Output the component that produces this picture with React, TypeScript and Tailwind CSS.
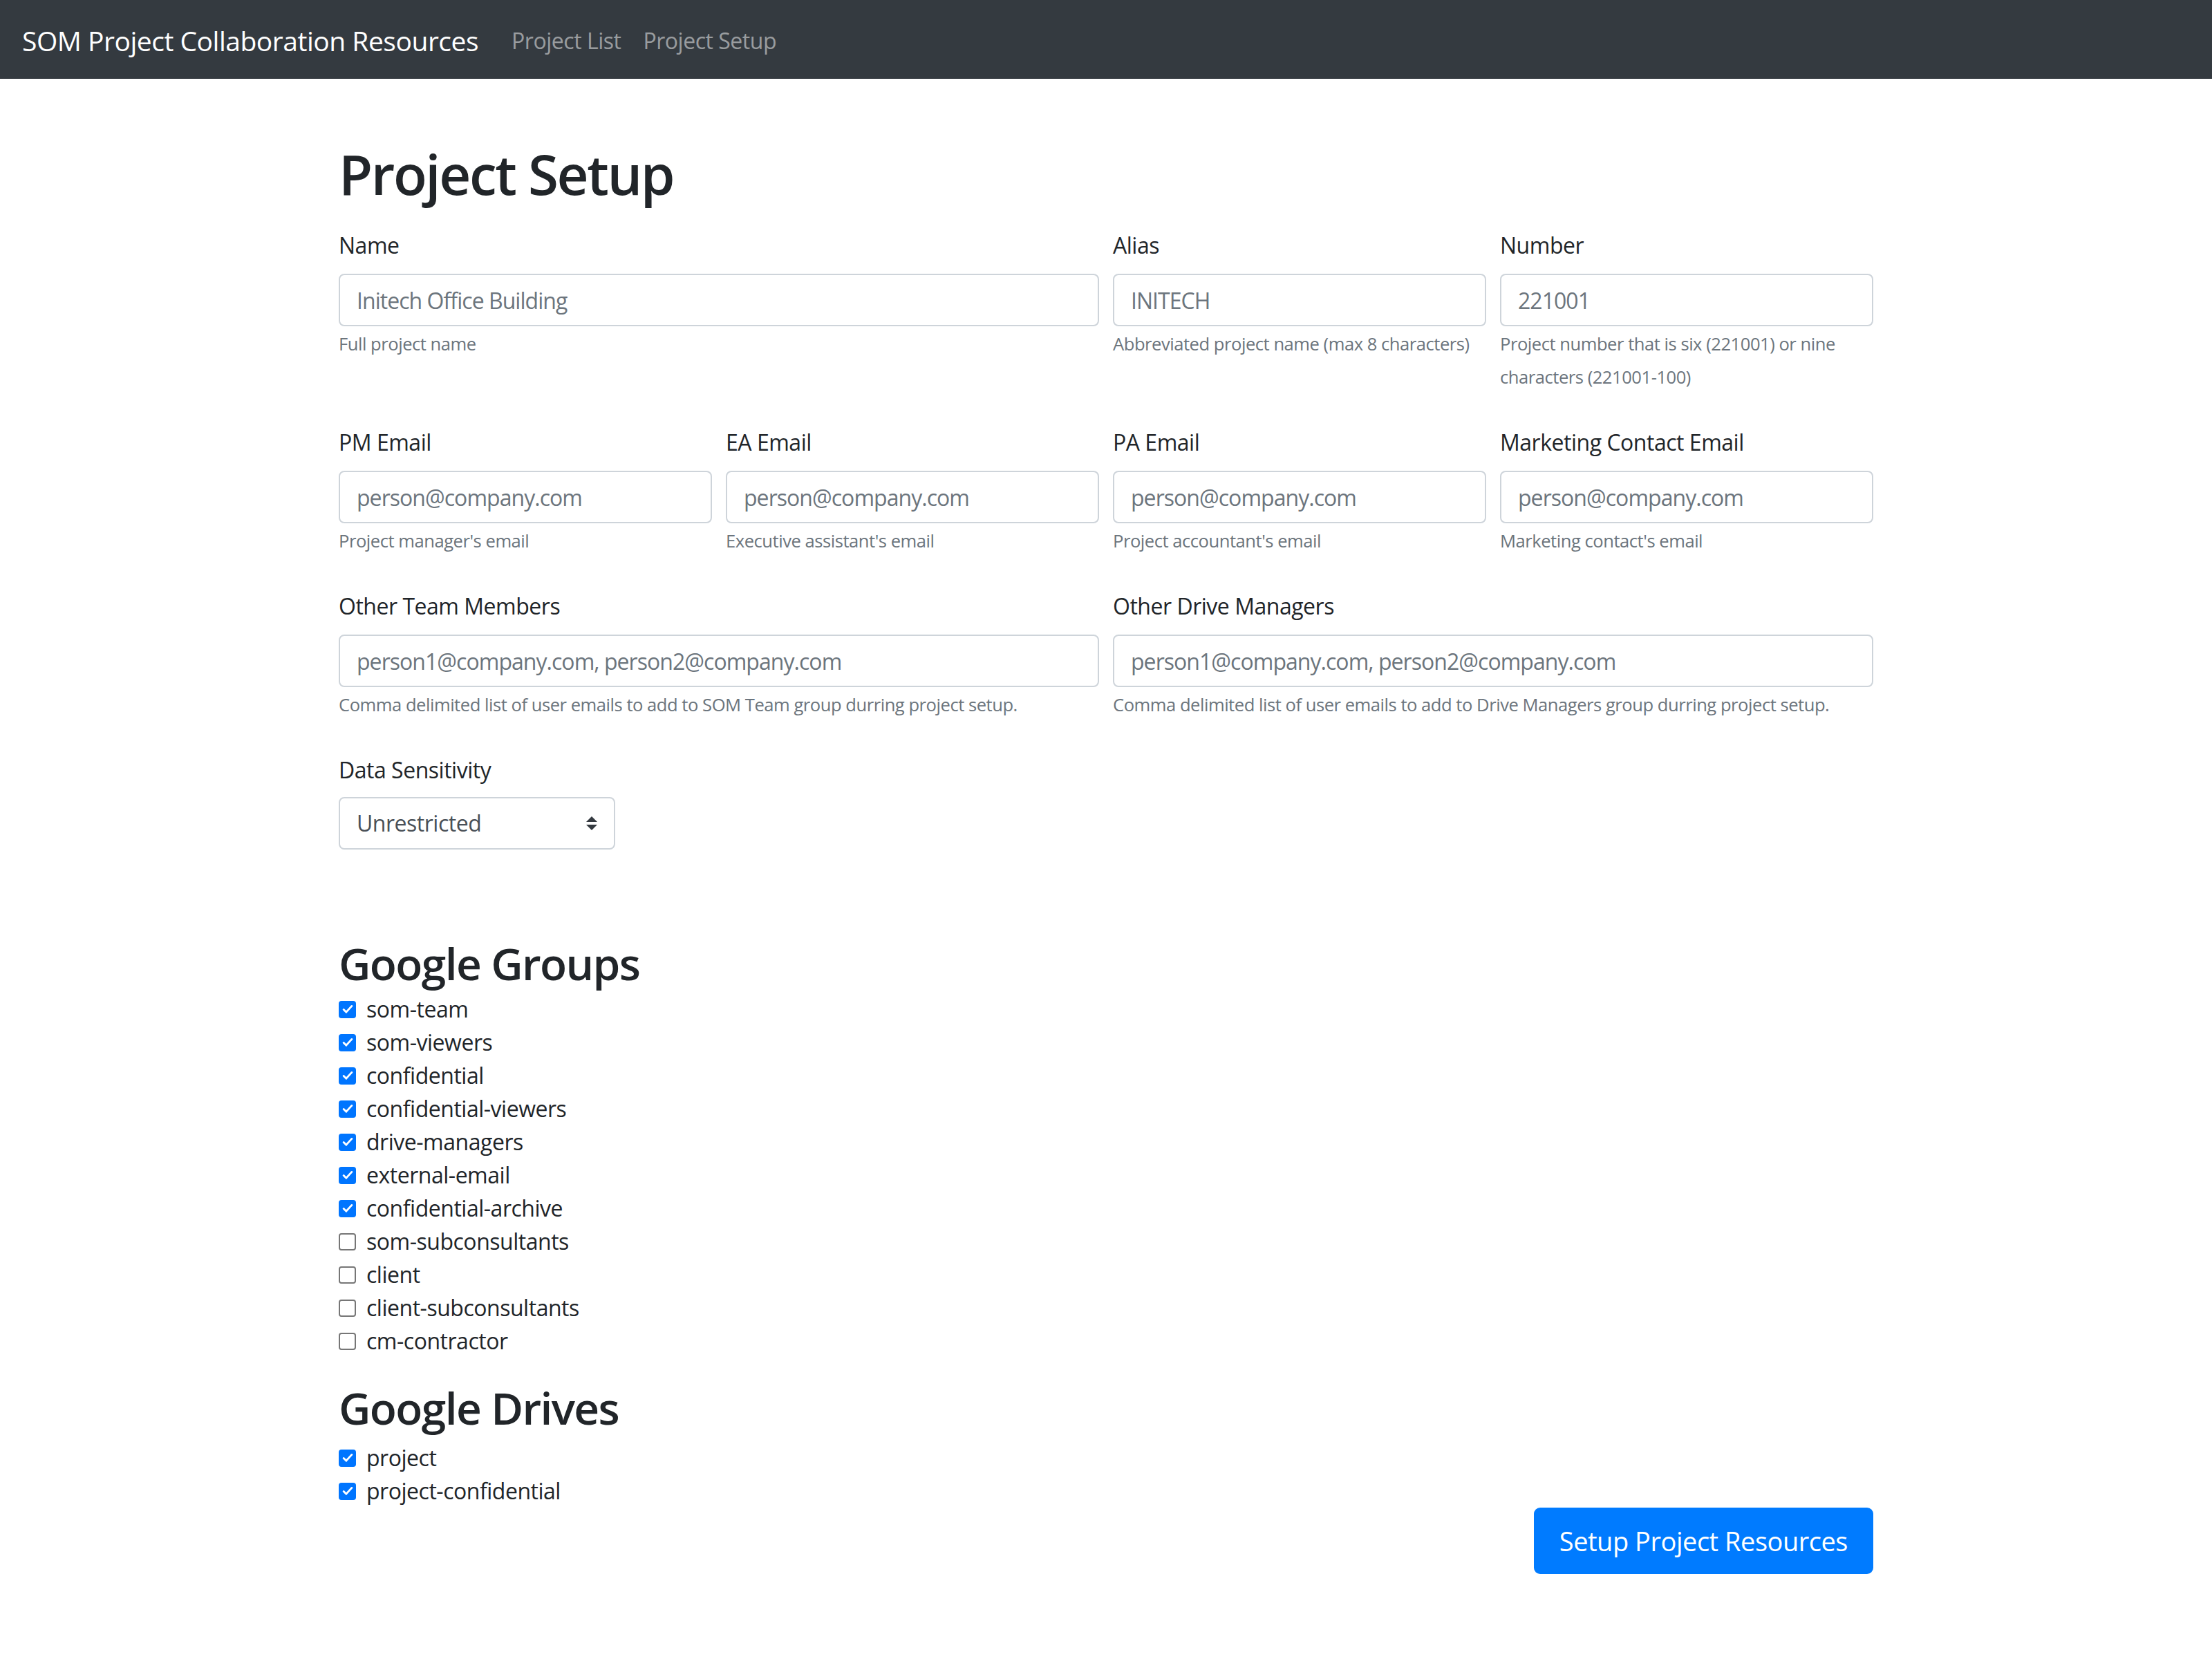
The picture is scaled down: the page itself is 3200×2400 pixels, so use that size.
import React from "react";

const groups = [
  { name: "som-team", checked: true },
  { name: "som-viewers", checked: true },
  { name: "confidential", checked: true },
  { name: "confidential-viewers", checked: true },
  { name: "drive-managers", checked: true },
  { name: "external-email", checked: true },
  { name: "confidential-archive", checked: true },
  { name: "som-subconsultants", checked: false },
  { name: "client", checked: false },
  { name: "client-subconsultants", checked: false },
  { name: "cm-contractor", checked: false },
];

const drives = [
  { name: "project", checked: true },
  { name: "project-confidential", checked: true },
];

function Box({ checked }: { checked: boolean }) {
  if (!checked) {
    return <span className="h-[25px] w-[25px] shrink-0 rounded-[4px] border-[2px] border-[#767676] bg-white" />;
  }
  return (
    <span className="flex h-[25px] w-[25px] shrink-0 items-center justify-center rounded-[4px] bg-[#0075ff]">
      <svg viewBox="0 0 24 24" className="h-[20px] w-[20px]">
        <path d="M5 12.5l4.5 4.5L19 6.5" stroke="white" strokeWidth="3.4" fill="none" strokeLinecap="round" strokeLinejoin="round" />
      </svg>
    </span>
  );
}

function CheckList({ items }: { items: { name: string; checked: boolean }[] }) {
  return (
    <div className="flex flex-col">
      {items.map((it) => (
        <label key={it.name} className="flex h-[48px] items-center gap-[15px] text-[32px]">
          <Box checked={it.checked} />
          <span>{it.name}</span>
        </label>
      ))}
    </div>
  );
}

function Field({
  label,
  placeholder,
  help,
  className = "",
}: {
  label: string;
  placeholder: string;
  help: React.ReactNode;
  className?: string;
}) {
  return (
    <div className={`flex flex-col ${className}`}>
      <label className="mb-[17px] text-[32px] leading-[48px]">{label}</label>
      <input
        readOnly
        placeholder={placeholder}
        className="h-[76px] w-full rounded-[8px] border-[2px] border-[#ced4da] bg-white px-[24px] text-[32px] tracking-[-0.03em] placeholder:text-[#6c757d] outline-none"
      />
      <div className="mt-[2px] text-[25.6px] leading-[48px] text-[#6c757d]">{help}</div>
    </div>
  );
}

export default function App() {
  return (
    <div className="min-h-screen bg-white font-['Open_Sans',sans-serif] tracking-[-0.03em] text-[#212529]">
      <nav className="flex h-[114px] items-center bg-[#343a40] px-[32px] pt-[4px]">
        <span className="mr-[32px] text-[39px] text-white">SOM Project Collaboration Resources</span>
        <a className="px-[16px] text-[32px] text-white/50">Project List</a>
        <a className="px-[16px] text-[32px] text-white/50">Project Setup</a>
      </nav>

      <main className="mx-auto w-[2220px] pb-[100px] pt-[89px]">
        <h1 className="mb-[32px] text-[80px] font-semibold leading-[96px] tracking-[-0.03em]">Project Setup</h1>

        <form className="flex flex-col gap-[46px]">
          <div className="grid grid-cols-4 gap-x-[20px]">
            <Field className="col-span-2" label="Name" placeholder="Initech Office Building" help="Full project name" />
            <Field label="Alias" placeholder="INITECH" help="Abbreviated project name (max 8 characters)" />
            <Field
              label="Number"
              placeholder="221001"
              help={
                <>
                  Project number that is six (221001) or nine
                  <br />
                  characters (221001-100)
                </>
              }
            />
          </div>

          <div className="grid grid-cols-4 gap-x-[20px]">
            <Field label="PM Email" placeholder="person@company.com" help="Project manager's email" />
            <Field label="EA Email" placeholder="person@company.com" help="Executive assistant's email" />
            <Field label="PA Email" placeholder="person@company.com" help="Project accountant's email" />
            <Field label="Marketing Contact Email" placeholder="person@company.com" help="Marketing contact's email" />
          </div>

          <div className="grid grid-cols-4 gap-x-[20px]">
            <Field
              className="col-span-2"
              label="Other Team Members"
              placeholder="person1@company.com, person2@company.com"
              help="Comma delimited list of user emails to add to SOM Team group durring project setup."
            />
            <Field
              className="col-span-2"
              label="Other Drive Managers"
              placeholder="person1@company.com, person2@company.com"
              help="Comma delimited list of user emails to add to Drive Managers group durring project setup."
            />
          </div>

          <div className="flex flex-col">
            <label className="mb-[15px] text-[32px] leading-[48px]">Data Sensitivity</label>
            <div className="flex h-[76px] w-[400px] items-center justify-between rounded-[8px] border-[2px] border-[#ced4da] bg-white pl-[24px] pr-[24px] text-[32px] text-[#495057]">
              <span>Unrestricted</span>
              <svg viewBox="0 0 4 5" className="h-[20px] w-[16px]">
                <path d="M2 0L0 2h4zm0 5L0 3h4z" fill="#343a40" />
              </svg>
            </div>
          </div>
        </form>

        <h2 className="mb-[4px] mt-[126px] text-[64px] font-semibold leading-[77px] tracking-[-0.025em]">Google Groups</h2>
        <CheckList items={groups} />

        <h2 className="mb-[10px] mt-[34px] text-[64px] font-semibold leading-[77px] tracking-[-0.025em]">Google Drives</h2>
        <CheckList items={drives} />

        <div className="flex justify-end">
          <button className="h-[96px] rounded-[9px] bg-[#007bff] px-[37px] text-[38px] text-white">
            Setup Project Resources
          </button>
        </div>
      </main>
    </div>
  );
}
